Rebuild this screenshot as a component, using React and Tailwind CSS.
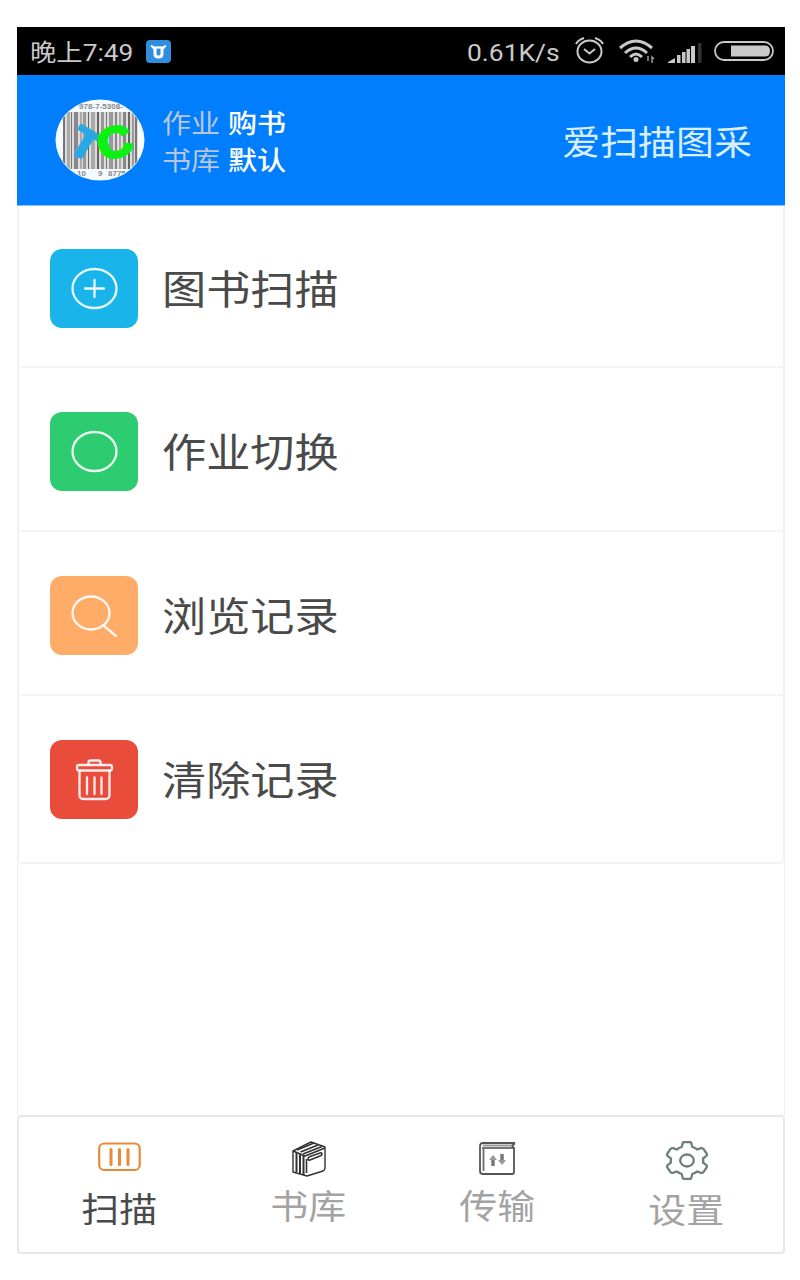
const menuItems = [
  { label: "图书扫描", icon: "plus", tile: "bg-[#19b4ea]" },
  { label: "作业切换", icon: "circle", tile: "bg-[#2dcc70]" },
  { label: "浏览记录", icon: "search", tile: "bg-[#feac68]" },
  { label: "清除记录", icon: "trash", tile: "bg-[#ea4c3b]" },
];

const bars = [
  [8, 2, "#777"], [12, 3, "#aaa"], [16, 1, "#777"], [19, 4, "#888"],
  [25, 2, "#aaa"], [28, 3, "#999"], [33, 1, "#666"], [36, 4, "#aaa"],
  [42, 2, "#666"], [46, 3, "#999"], [51, 1, "#777"], [54, 4, "#999"],
  [60, 2, "#888"], [64, 2, "#aaa"], [68, 3, "#888"], [73, 2, "#666"],
  [77, 2, "#999"], [80, 2, "#777"],
];

const Avatar = () => (
  <svg className="h-[82px] w-[90px]" viewBox="0 0 90 82">
    <defs>
      <clipPath id="avatar">
        <ellipse cx="45" cy="41" rx="44" ry="40" />
      </clipPath>
    </defs>
    <ellipse cx="45" cy="41" rx="44.5" ry="40.5" fill="#f5faff" />
    <g clipPath="url(#avatar)">
      <rect x="8" y="13" width="75" height="57" fill="#dcdcdc" />
      {bars.map(([x, width, fill]) => (
        <rect key={x} x={x} y="13" width={width} height="57" fill={fill} />
      ))}
      <g fontFamily="Liberation Sans" fill="#888" fontSize="8" fontWeight="bold">
        <text x="24" y="10" textLength="44">978-7-5308-</text>
        <text x="22" y="77">10</text>
        <text x="43" y="77">9</text>
        <text x="53" y="77">8775</text>
      </g>
      <g fontFamily="Liberation Sans" fontWeight="bold" strokeLinejoin="round">
        <text
          transform="translate(11 50) rotate(31) scale(1.1 1)"
          fontSize="41"
          fill="#28a9e5"
          stroke="#28a9e5"
          strokeWidth="2.5"
        >
          T
        </text>
        <text
          transform="translate(47 62) rotate(-15) scale(1.1 1)"
          fontSize="43"
          fill="#0cf012"
          stroke="#0cf012"
          strokeWidth="3"
        >
          C
        </text>
      </g>
    </g>
  </svg>
);

const MenuIcon = ({ name }) => (
  <svg
    className="h-[79px] w-[88px]"
    viewBox="0 0 88 79"
    fill="none"
    stroke="#fff"
    strokeWidth="2.300"
    strokeLinecap="round"
    strokeLinejoin="round"
    strokeOpacity="0.9"
  >
    {name === "plus" && (
      <>
        <ellipse cx="44.500" cy="39.500" rx="22" ry="19.500" />
        <path d="M35 39.500h19M44.500 31v17" />
      </>
    )}
    {name === "circle" && (
      <ellipse cx="44.500" cy="39.500" rx="22" ry="19.500" />
    )}
    {name === "search" && (
      <>
        <ellipse cx="41" cy="37" rx="18.500" ry="16.500" />
        <path d="M53.500 49.500L66 60" />
      </>
    )}
    {name === "trash" && (
      <>
        <path d="M38.500 25V22.500q0-2 2-2h8q2 0 2 2V25" />
        <rect x="27" y="25" width="35" height="5.500" rx="2" />
        <path d="M29.500 30.500V55q0 4 4 4h22q4 0 4-4V30.500" />
        <path d="M37 37.500v16.500M44.500 37.500v16.500M51.500 37.500v16.500" />
      </>
    )}
  </svg>
);

const StatusBar = () => (
  <div className="flex h-[48px] items-center justify-between bg-black pr-[11px] pl-[13px] text-[#c9c9c9]">
    <div className="flex items-center">
      <span className="w-[116px] origin-left scale-x-[1.12] pt-[5px] text-[23.500px] leading-none whitespace-nowrap">
        晚上7:49
      </span>
      <svg className="h-[23px] w-[25px]" viewBox="0 0 25 23">
        <rect width="25" height="23" rx="4" fill="#2f8fdd" />
        <path d="M5 5.500L8 8M20 5.500L17 8" stroke="#fff" strokeWidth="2" />
        <path d="M9 7v7q0 3 3.500 3t3.500-3V7" fill="none" stroke="#fff" strokeWidth="3" />
        <path d="M6.500 7.500h12" stroke="#fff" strokeWidth="2.200" />
      </svg>
    </div>
    <div className="flex items-center">
      <span className="w-[108px] origin-left scale-x-[1.1] pt-[3px] text-[24px] leading-none">
        0.61K/s
      </span>
      <svg className="h-[28px] w-[29px]" viewBox="0 0 29 28" fill="none" stroke="#c9c9c9" strokeWidth="2">
        <ellipse cx="14.500" cy="14.500" rx="12" ry="11" />
        <path d="M9 12l5.500 4.500L20 12" />
        <path d="M1 7q2-4 8-6M28 7q-2-4-8-6" />
      </svg>
      <svg className="ml-[15px] h-[24px] w-[36px]" viewBox="0 0 36 24" fill="none" stroke="#c9c9c9" strokeWidth="3">
        <path d="M1 9Q17-5 33 9" />
        <path d="M6 14Q17 4 28 14" />
        <path d="M11 18Q17 12 23 18" />
        <circle cx="17" cy="20.500" r="2.500" fill="#c9c9c9" stroke="none" />
        <path d="M29 22v-5M33 24v-6l2 2" strokeWidth="1.500" stroke="#999" />
      </svg>
      <svg className="mt-[3px] ml-[13px] h-[20px] w-[34px]" viewBox="0 0 34 20" fill="#c9c9c9">
        <path d="M0 20v-1l7-4v5z" />
        <rect x="9" y="12" width="3.500" height="8" />
        <rect x="14" y="9" width="3.500" height="11" />
        <rect x="18.500" y="6" width="3.500" height="14" />
        <rect x="23" y="3" width="4" height="17" />
        <rect x="30" y="0" width="3.500" height="20" fill="#333" />
      </svg>
      <svg className="ml-[12px] h-[20px] w-[60px]" viewBox="0 0 60 20">
        <rect x="1" y="1" width="58" height="18" rx="9" fill="none" stroke="#c9c9c9" strokeWidth="1.800" />
        <path d="M17 4.500h34q5 0 5 5.500t-5 5.500H17z" fill="#c9c9c9" />
      </svg>
    </div>
  </div>
);

const Header = () => (
  <header className="flex h-[131px] items-center border-b border-[#7fc4ff] bg-[#007efe] pl-[38px]">
    <Avatar />
    <div className="ml-[17px] w-[140px] origin-left scale-x-[1.11] pt-[5px] text-[26.200px] leading-[37px] text-white">
      <p className="flex gap-[7px]">
        <span className="text-[#b9c6d6]">作业</span>
        <span className="font-medium">购书</span>
      </p>
      <p className="flex gap-[7px]">
        <span className="text-[#b9c6d6]">书库</span>
        <span className="font-medium">默认</span>
      </p>
    </div>
    <h1 className="mr-[33px] ml-auto origin-right scale-x-[1.11] pt-[7px] text-[34.200px] leading-none text-[#d9eeff]">
      爱扫描图采
    </h1>
  </header>
);

const ScanIcon = () => (
  <svg className="h-[30px] w-[43px]" viewBox="0 0 43 30" fill="none" stroke="#ea8833" strokeLinecap="round">
    <rect x="1.200" y="1.500" width="40.500" height="26.500" rx="5" strokeWidth="2.200" />
    <path d="M13 7.500v15M21.500 7.500v15M30 7.500v15" strokeWidth="3" />
  </svg>
);

const BooksIcon = () => (
  <svg className="h-[36px] w-[34px]" viewBox="0 0 34 36" fill="none" stroke="#333" strokeWidth="1.400" strokeLinejoin="round">
    <path d="M1 10L19 1l14 5v21q0 2-2 3L15 35 1 31z" fill="#fff" />
    <path d="M1 10l12 5L33 7" strokeWidth="1.600" />
    <path d="M5 9L22 2M8.500 11L26 4M11 13L30 5.500" strokeWidth="1.800" />
    <path d="M4.500 12v19M8 13v20M11.500 15v19" strokeWidth="2" />
    <path d="M18 15.500l10-3.500q2-.5 2 1t-2 2L18 19q-2 .5-2-1t2-2.500z" strokeWidth="1.600" />
    <path d="M14.500 18v14" strokeWidth="1.600" />
  </svg>
);

const TransferIcon = () => (
  <svg className="h-[33px] w-[37px]" viewBox="0 0 37 33" fill="none" stroke="#555" strokeWidth="1.800" strokeLinejoin="round">
    <path d="M36 1H4Q1 1 1 4v25q0 3 3 3h29q2 0 2-2V6l-2-2 3-3" />
    <path d="M3 6h32" strokeWidth="1.600" />
    <path d="M4 3.500h29" stroke="#999" strokeWidth="2" />
    <path d="M4.500 7v22" stroke="#777" strokeWidth="2" />
    <g strokeWidth="3.500" stroke="#777">
      <path d="M14 24v-7M23 12v7" />
    </g>
    <path d="M10 18l4-5 4 5zM19 18l4 5 4-5z" fill="#999" stroke="none" />
  </svg>
);

const GearIcon = () => (
  <svg className="h-[39px] w-[44px]" viewBox="0 0 44 39" fill="none" stroke="#6d7f7d" strokeWidth="2.300" strokeLinejoin="round">
    <path d="M17.500 3q0-2 2-2h5q2 0 2 2l.8 3q2.700.8 5 2.500l3.700-1.300q1.700-.5 2.600 1l3 4.300q.9 1.500-.5 2.700L38 17.500q.5 2 0 4l3.100 2.300q1.400 1.200.5 2.700l-3 4.300q-.9 1.500-2.600 1l-3.700-1.300q-2.300 1.700-5 2.500l-.8 3q0 2-2 2h-5q-2 0-2-2l-.8-3q-2.700-.8-5-2.500L8 31.800q-1.700.5-2.600-1l-3-4.300q-.9-1.500.5-2.700L6 21.500q-.5-2 0-4l-3.100-2.300q-1.400-1.200-.5-2.700l3-4.300q.9-1.500 2.600-1l3.700 1.300q2.300-1.700 5-2.500z" />
    <ellipse cx="22" cy="19.500" rx="6.800" ry="6" />
  </svg>
);

const TabBar = () => (
  <nav className="flex h-[139px] rounded border-2 border-[#e8e8e8] text-[34.200px] leading-none text-[#a3a3a3]">
    <div className="flex w-[201px] flex-col items-center pt-[25px]">
      <ScanIcon />
      <span className="mt-[21px] scale-x-[1.11] text-[#4a4a4a]">扫描</span>
    </div>
    <div className="flex w-[177px] flex-col items-center pt-[24px]">
      <BooksIcon />
      <span className="mt-[13px] scale-x-[1.11]">书库</span>
    </div>
    <div className="flex w-[201px] flex-col items-center pt-[25px]">
      <TransferIcon />
      <span className="mt-[15px] scale-x-[1.11]">传输</span>
    </div>
    <div className="flex w-[177px] flex-col items-center pt-[24px]">
      <GearIcon />
      <span className="mt-[14px] scale-x-[1.11]">设置</span>
    </div>
  </nav>
);

const App = () => {
  return (
    <div className="h-[1280px] w-[800px] bg-white pt-[27px] pl-[17px] font-[Roboto,'Noto_Sans_CJK_SC',sans-serif]">
      <div className="flex h-[1227px] w-[768px] flex-col">
        <StatusBar />
        <Header />

        <main className="flex-1 border-x border-[#f0f0f0]">
          <ul className="h-[658px] divide-y-2 divide-[#f5f5f5] rounded-b border-x border-b-2 border-[#f2f2f2]">
            {menuItems.map((item) => (
              <li
                key={item.label}
                className="flex h-[164px] items-center pt-1 pl-[31px] first:h-[162px] last:pt-0.5"
              >
                <div className={`h-[79px] w-[88px] rounded-[12px] ${item.tile}`}>
                  <MenuIcon name={item.icon} />
                </div>
                <span className="ml-6 origin-left scale-x-[1.11] pt-[6px] text-[39.800px] leading-none text-[#4a4a4a]">
                  {item.label}
                </span>
              </li>
            ))}
          </ul>
        </main>

        <TabBar />
      </div>
    </div>
  );
};

export default App;
